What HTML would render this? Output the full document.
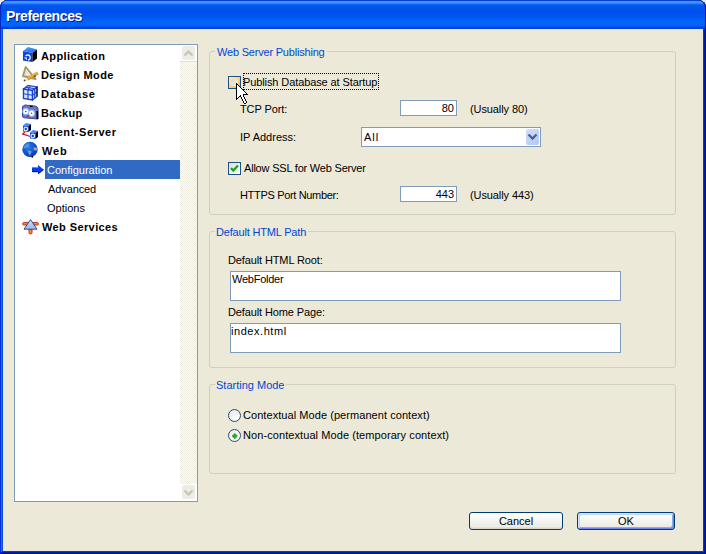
<!DOCTYPE html>
<html><head><meta charset="utf-8">
<style>
*{margin:0;padding:0;box-sizing:border-box}
html,body{width:706px;height:554px;overflow:hidden;background:#ECE9D8}
body{position:relative;font-family:"Liberation Sans",sans-serif;font-size:11px;color:#000}
.a{position:absolute}
.t{position:absolute;white-space:pre;line-height:13px;font-size:11px}
.tr{position:absolute;white-space:pre;line-height:13px;font-size:11px}
.b{font-weight:bold}
#frame{position:absolute;left:0;top:0;width:706px;height:554px;background:#ECE9D8;border-radius:8px 8px 0 0;
 box-shadow:inset -1px -1px #00138c,inset 1px 1px #0831d9,inset -2px -2px #001ea0,inset 2px 2px #166aee,inset -3px -3px #003bda,inset 3px 3px #0855dd;}
#title{position:absolute;left:0;top:0;width:706px;height:29px;border-radius:8px 8px 0 0;
 background:linear-gradient(180deg,#0A3CD8 0px,#0A3CD8 1px,#3D95FF 1px,#3D95FF 3px,#1C70FA 4px,#0058EE 5px,#0053E8 8px,#0050EE 12px,#0056F4 17px,#0063FC 21px,#0066FF 25px,#0060FA 26px,#0045DA 27px,#003DD7 29px);
 box-shadow:inset 1px 0 #0028C0,inset -1px 0 #001A9A}
#title .tt{position:absolute;left:6px;top:8px;font-size:14px;font-weight:bold;color:#fff;line-height:16px;text-shadow:1px 1px #0A1883;white-space:pre;letter-spacing:-0.38px}
.gb{position:absolute;border:1px solid #D0D0BF;border-radius:3px}
.gt{position:absolute;color:#0046D5;background:#ECE9D8;padding:0 2px;white-space:pre;line-height:13px}
.tb{position:absolute;background:#fff;border:1px solid #7F9DB9}
.chk{position:absolute;width:13px;height:13px;border:1px solid #1C5180;background:linear-gradient(135deg,#DCDCD7,#FFFFFF)}
.rad{position:absolute;width:13px;height:13px;border-radius:50%;border:1px solid #1C5180;background:radial-gradient(circle at 70% 70%,#fff 0,#E6E6E0 100%)}
.btn{position:absolute;height:18px;border:1px solid #003C74;border-radius:3px;background:linear-gradient(180deg,#FFFFFF 0,#F6F6F2 40%,#ECEBE6 85%,#D6D0C5 100%);text-align:center;line-height:16px}
</style></head><body>
<div id="frame"></div>
<div id="title"><div class="tt">Preferences</div></div>

<div class="a" style="left:14px;top:44px;width:184px;height:458px;border:1px solid #7F9DB9;background:#fff"></div>
<div class="a" style="left:180px;top:45px;width:17px;height:456px;background-color:#FEFEFB;background-image:repeating-conic-gradient(#EDEBE0 0 25%,#FEFEFB 0 50%);background-size:2px 2px"></div>
<div class="a" style="left:180px;top:45px;width:17px;height:17px;background:#fff;border-bottom:1px solid #E0DFD3"></div>
<div class="a" style="left:182px;top:46px;width:13px;height:14px;background:#EEEDE5;border-radius:2px"></div>
<svg class="a" style="left:180px;top:45px" width="17" height="17"><path d="M4.5 10.5 L8.5 6.5 L12.5 10.5" fill="none" stroke="#C6C4B5" stroke-width="2.2"/></svg>
<div class="a" style="left:180px;top:484px;width:17px;height:17px;background:#fff"></div>
<div class="a" style="left:182px;top:485px;width:13px;height:14px;background:#EEEDE5;border-radius:2px"></div>
<svg class="a" style="left:180px;top:484px" width="17" height="17"><path d="M4.5 6.5 L8.5 10.5 L12.5 6.5" fill="none" stroke="#C6C4B5" stroke-width="2.2"/></svg>

<div class="a" style="left:45px;top:160px;width:135px;height:19px;background:#316AC5"></div>
<div class="tr b" style="left:41px;top:50px;letter-spacing:0.4px">Application</div>
<div class="tr b" style="left:41px;top:69px;letter-spacing:0.4px">Design Mode</div>
<div class="tr b" style="left:41px;top:88px;letter-spacing:0.7px">Database</div>
<div class="tr b" style="left:41px;top:107px;letter-spacing:0.3px">Backup</div>
<div class="tr b" style="left:41px;top:126px;letter-spacing:0.55px">Client-Server</div>
<div class="tr b" style="left:42px;top:145px;letter-spacing:0.8px">Web</div>
<div class="tr" style="left:47px;top:164px;color:#fff">Configuration</div>
<div class="tr" style="left:48px;top:183px;letter-spacing:-0.1px">Advanced</div>
<div class="tr" style="left:47px;top:202px">Options</div>
<div class="tr b" style="left:42px;top:221px;letter-spacing:0.4px">Web Services</div>

<svg class="a" style="left:22px;top:46px" width="16" height="17">
 <defs><linearGradient id="cf" x1="0" y1="0" x2="0" y2="1"><stop offset="0" stop-color="#0C4EEC"/><stop offset="1" stop-color="#0834C0"/></linearGradient>
 <linearGradient id="ct" x1="0" y1="0" x2="1" y2="1"><stop offset="0" stop-color="#58A4FF"/><stop offset="1" stop-color="#1A60EC"/></linearGradient></defs>
 <polygon points="1,5 6,1 15,3.5 10.5,7" fill="url(#ct)"/>
 <polygon points="1,5 10.5,7 10.5,16 1,14.5" fill="url(#cf)"/>
 <polygon points="10.5,7 15,3.5 15,12.5 10.5,16" fill="#000"/>
 <path d="M3.6 10.2 A2.5 2.5 0 1 1 6 14" fill="none" stroke="#F0F4FF" stroke-width="1.3"/>
 <path d="M2.2 12 L4.2 11.8 L4.6 13.8" fill="none" stroke="#E0E8FF" stroke-width="1.1"/>
</svg>
<svg class="a" style="left:22px;top:65px" width="17" height="17">
 <polygon points="3.7,2 1,11 13.5,14.2" fill="none" stroke="#A49664" stroke-width="1.9" stroke-linejoin="round"/>
 <polygon points="4.3,6.2 3.3,10 8.2,11.2" fill="none" stroke="#D0C8A0" stroke-width="0.9"/>
 <line x1="5.5" y1="14.2" x2="15.8" y2="7.8" stroke="#D49228" stroke-width="3.2"/>
 <line x1="5.5" y1="13.5" x2="15.3" y2="7.4" stroke="#F4C468" stroke-width="1"/>
 <polygon points="2,16 4.3,12.6 6.3,15.4" fill="#ECECC0"/>
 <circle cx="2.6" cy="15.4" r="0.9" fill="#404040"/>
 <circle cx="13" cy="11.3" r="0.8" fill="#101010"/>
</svg>
<svg class="a" style="left:22px;top:84px" width="16" height="17">
 <polygon points="1.5,5 6,1.5 15,3 10.5,6.5" fill="#C8E0F4" stroke="#2048D0" stroke-width="1.2"/>
 <polygon points="1.5,5 10.5,6.5 10.5,16 1.5,14.5" fill="#D4EAF4" stroke="#1C40C8" stroke-width="1.4"/>
 <polygon points="10.5,6.5 15,3 15,12.5 10.5,16" fill="#B8D8EC" stroke="#1C40C8" stroke-width="1.2"/>
 <path d="M6 5.75 V15.25 M1.5 9.75 L10.5 11.25 M3.75 3.25 L12.75 4.75 M8.25 2.25 L5.75 5.75 M12.75 4.75 V14.25 M10.5 11.25 L15 7.75" fill="none" stroke="#2048D0" stroke-width="1.2"/>
 <line x1="15" y1="3" x2="15" y2="12.5" stroke="#000" stroke-width="1"/>
</svg>
<svg class="a" style="left:22px;top:103px" width="17" height="17">
 <polygon points="0.5,3.5 3,2 14,3.2 16,5 16,16 2,14.8 0.5,13.8" fill="#6676C6" stroke="#3A4898" stroke-width="1"/>
 <ellipse cx="3.8" cy="8.5" rx="3.4" ry="3.7" fill="#9CBAF0"/>
 <ellipse cx="9.6" cy="10.3" rx="3.4" ry="3.7" fill="#9CBAF0"/>
 <circle cx="3.8" cy="8.5" r="2.5" fill="#fff"/><circle cx="3.8" cy="8.5" r="0.8" fill="#4050A8"/>
 <circle cx="9.6" cy="10.3" r="2.5" fill="#fff"/><circle cx="9.6" cy="10.3" r="0.8" fill="#4050A8"/>
 <rect x="14.4" y="8" width="1.8" height="8" fill="#000"/>
 <rect x="8" y="2.7" width="2.6" height="1.3" fill="#000"/>
 <rect x="5.3" y="12.2" width="1.7" height="1.5" fill="#D01010"/>
</svg>
<svg class="a" style="left:22px;top:122px" width="17" height="18">
 <polygon points="1,3.5 4,1 9,2 6.5,4" fill="#3C8CFF"/>
 <polygon points="1,3.5 6.5,4 6.5,10 1,9.5" fill="#0C44E0"/>
 <polygon points="6.5,4 9,2 9,8 6.5,10" fill="#000"/>
 <circle cx="3.8" cy="7" r="1.8" fill="none" stroke="#E8F0FF" stroke-width="1.2"/>
 <path d="M3 10 L0.8 12 L8.5 14.5" fill="none" stroke="#C01818" stroke-width="1.3"/>
 <polygon points="8,10.5 11,8 16,9 13.5,11" fill="#3C8CFF"/>
 <polygon points="8,10.5 13.5,11 13.5,17 8,16.5" fill="#0C44E0"/>
 <polygon points="13.5,11 16,9 16,15 13.5,17" fill="#000"/>
 <circle cx="10.8" cy="14" r="1.8" fill="none" stroke="#E8F0FF" stroke-width="1.2"/>
</svg>
<svg class="a" style="left:22px;top:141px" width="17" height="17">
 <defs><radialGradient id="gl" cx="0.4" cy="0.35" r="0.75"><stop offset="0" stop-color="#2A7EE8"/><stop offset="0.6" stop-color="#0A52D0"/><stop offset="1" stop-color="#06309C"/></radialGradient></defs>
 <circle cx="8" cy="8.4" r="7.7" fill="url(#gl)"/>
 <path d="M1.5 6 Q3.5 2.2 7.5 2.2 L6.8 5.5 Q4.5 7.5 2 7.5 Z" fill="#5AA4E4" opacity="0.75"/>
 <path d="M5.5 9.5 L9.5 10 L9 12.5 L7.5 14.5 L6.5 12 Z" fill="#8C98B4"/>
 <path d="M11.5 6.5 L15.2 6.8 L15.4 9.5 L12 9.2 Z" fill="#B8A0B4"/>
 <rect x="9.5" y="15" width="1.6" height="1.6" fill="#000"/>
</svg>
<svg class="a" style="left:31px;top:164px" width="15" height="12">
 <polygon points="2,4 8,4 8,2 13.5,6.5 8,11 8,9 2,9" fill="#C8C8C8" opacity="0.6"/>
 <polygon points="1,3 7,3 7,1 12.5,5.5 7,10 7,8 1,8" fill="#0A3CEB"/>
 <line x1="1" y1="3.4" x2="7.3" y2="3.4" stroke="#40D0FF" stroke-width="0.8"/>
 <line x1="1" y1="7.6" x2="7" y2="7.6" stroke="#000070" stroke-width="0.8"/>
 <line x1="7.2" y1="9.7" x2="12.5" y2="5.5" stroke="#000060" stroke-width="1"/>
</svg>
<svg class="a" style="left:22px;top:217px" width="17" height="18">
 <rect x="0.6" y="5.6" width="15.8" height="2.4" rx="1.1" fill="#F49428" stroke="#C41818" stroke-width="0.9"/>
 <rect x="7" y="12" width="3" height="4.8" rx="1" fill="#F49428" stroke="#C41818" stroke-width="0.9"/>
 <defs><linearGradient id="wt" x1="0" y1="0" x2="0" y2="1"><stop offset="0" stop-color="#C0E0FF"/><stop offset="1" stop-color="#98B8F4"/></linearGradient></defs>
 <polygon points="8.5,2.5 15,12.2 2,12.2" fill="url(#wt)" stroke="#2A3A80" stroke-width="0.9" stroke-linejoin="round"/>
</svg>
<div class="gb" style="left:209px;top:51px;width:467px;height:164px"></div>
<div class="gt" style="left:215px;top:46px;letter-spacing:-0.2px">Web Server Publishing</div>
<div class="a" style="left:228px;top:76px;width:13px;height:13px;background:#1C5180"></div>
<div class="a" style="left:229px;top:77px;width:11px;height:11px;background:linear-gradient(135deg,#FFF0CF 0%,#F9D48A 50%,#F8B330 100%)"></div>
<div class="a" style="left:231px;top:79px;width:7px;height:7px;background:linear-gradient(135deg,#DCDCD7,#F0F0EC)"></div>
<div class="a" style="left:243px;top:73px;width:136px;height:17px;border:1px dotted #000"></div>
<div class="t" style="left:243px;top:76px;letter-spacing:-0.1px">Publish Database at Startup</div>
<div class="t" style="left:240px;top:103px;letter-spacing:-0.1px">TCP Port:</div>
<div class="tb" style="left:400px;top:100px;width:57px;height:16px"></div>
<div class="t" style="left:400px;top:102px;width:54px;text-align:right">80</div>
<div class="t" style="left:470px;top:103px;letter-spacing:-0.1px">(Usually 80)</div>
<div class="t" style="left:240px;top:131px">IP Address:</div>
<div class="tb" style="left:361px;top:127px;width:180px;height:20px"></div>
<div class="t" style="left:364px;top:131px;letter-spacing:1px">All</div>
<div class="a" style="left:526px;top:129px;width:13px;height:16px;border-radius:2px;background:linear-gradient(135deg,#D2E0FD,#B0C6F6)"></div>
<svg class="a" style="left:526px;top:129px" width="13" height="16"><path d="M2.5 5.5 L6.5 9.5 L10.5 5.5" fill="none" stroke="#4D6185" stroke-width="2.3"/></svg>
<div class="chk" style="left:228px;top:162px"></div>
<svg class="a" style="left:228px;top:162px" width="13" height="13"><path d="M3 6 L5.3 8.5 L10 3.5" fill="none" stroke="#21A121" stroke-width="2.3"/></svg>
<div class="t" style="left:244px;top:162px;letter-spacing:-0.2px">Allow SSL for Web Server</div>
<div class="t" style="left:240px;top:189px;letter-spacing:-0.33px">HTTPS Port Number:</div>
<div class="tb" style="left:400px;top:186px;width:57px;height:16px"></div>
<div class="t" style="left:400px;top:188px;width:54px;text-align:right">443</div>
<div class="t" style="left:470px;top:189px;letter-spacing:-0.1px">(Usually 443)</div>
<div class="gb" style="left:209px;top:231px;width:467px;height:137px"></div>
<div class="gt" style="left:215px;top:226px;letter-spacing:-0.18px;padding-left:1px">Default HTML Path</div>
<div class="t" style="left:228px;top:254px;letter-spacing:-0.12px">Default HTML Root:</div>
<div class="tb" style="left:230px;top:271px;width:391px;height:30px"></div>
<div class="t" style="left:232px;top:273px;letter-spacing:-0.25px">WebFolder</div>
<div class="t" style="left:228px;top:306px;letter-spacing:-0.12px">Default Home Page:</div>
<div class="tb" style="left:230px;top:323px;width:391px;height:30px"></div>
<div class="t" style="left:231px;top:325px;letter-spacing:0.55px">index.html</div>
<div class="gb" style="left:209px;top:384px;width:467px;height:90px"></div>
<div class="gt" style="left:215px;top:379px;padding-left:1px">Starting Mode</div>
<div class="rad" style="left:228px;top:409px"></div>
<div class="rad" style="left:228px;top:429px"></div>
<div class="a" style="left:232.7px;top:433.7px;width:3.6px;height:3.6px;background:#2AAE2A;transform:rotate(45deg);box-shadow:0 0 0.6px #1A8A1A"></div>
<div class="t" style="left:243px;top:409px;letter-spacing:0.06px">Contextual Mode (permanent context)</div>
<div class="t" style="left:243px;top:429px;letter-spacing:0.08px">Non-contextual Mode (temporary context)</div>
<div class="btn" style="left:469px;top:512px;width:94px;letter-spacing:0px">Cancel</div>
<div class="btn" style="left:577px;top:512px;width:98px;box-shadow:inset 1px 1px #CEE7FF,inset -1px -1px #6982EE,inset 2px 2px #BCD4F6,inset -2px -2px #89ADE4">OK</div>
<svg class="a" style="left:236px;top:83px" width="12" height="21" shape-rendering="crispEdges"><path d="M0 0h1v1h-1zM0 1h1v1h-1zM1 1h1v1h-1zM0 2h1v1h-1zM2 2h1v1h-1zM0 3h1v1h-1zM3 3h1v1h-1zM0 4h1v1h-1zM4 4h1v1h-1zM0 5h1v1h-1zM5 5h1v1h-1zM0 6h1v1h-1zM6 6h1v1h-1zM0 7h1v1h-1zM7 7h1v1h-1zM0 8h1v1h-1zM8 8h1v1h-1zM0 9h1v1h-1zM9 9h1v1h-1zM0 10h1v1h-1zM10 10h1v1h-1zM0 11h1v1h-1zM7 11h1v1h-1zM8 11h1v1h-1zM9 11h1v1h-1zM10 11h1v1h-1zM11 11h1v1h-1zM0 12h1v1h-1zM4 12h1v1h-1zM7 12h1v1h-1zM0 13h1v1h-1zM3 13h1v1h-1zM4 13h1v1h-1zM7 13h1v1h-1zM0 14h1v1h-1zM2 14h1v1h-1zM5 14h1v1h-1zM8 14h1v1h-1zM0 15h1v1h-1zM1 15h1v1h-1zM5 15h1v1h-1zM8 15h1v1h-1zM0 16h1v1h-1zM6 16h1v1h-1zM9 16h1v1h-1zM6 17h1v1h-1zM9 17h1v1h-1zM7 18h1v1h-1zM10 18h1v1h-1zM7 19h1v1h-1zM10 19h1v1h-1zM8 20h1v1h-1zM9 20h1v1h-1z" fill="#000"/><path d="M1 2h1v1h-1zM1 3h1v1h-1zM2 3h1v1h-1zM1 4h1v1h-1zM2 4h1v1h-1zM3 4h1v1h-1zM1 5h1v1h-1zM2 5h1v1h-1zM3 5h1v1h-1zM4 5h1v1h-1zM1 6h1v1h-1zM2 6h1v1h-1zM3 6h1v1h-1zM4 6h1v1h-1zM5 6h1v1h-1zM1 7h1v1h-1zM2 7h1v1h-1zM3 7h1v1h-1zM4 7h1v1h-1zM5 7h1v1h-1zM6 7h1v1h-1zM1 8h1v1h-1zM2 8h1v1h-1zM3 8h1v1h-1zM4 8h1v1h-1zM5 8h1v1h-1zM6 8h1v1h-1zM7 8h1v1h-1zM1 9h1v1h-1zM2 9h1v1h-1zM3 9h1v1h-1zM4 9h1v1h-1zM5 9h1v1h-1zM6 9h1v1h-1zM7 9h1v1h-1zM8 9h1v1h-1zM1 10h1v1h-1zM2 10h1v1h-1zM3 10h1v1h-1zM4 10h1v1h-1zM5 10h1v1h-1zM6 10h1v1h-1zM7 10h1v1h-1zM8 10h1v1h-1zM9 10h1v1h-1zM1 11h1v1h-1zM2 11h1v1h-1zM3 11h1v1h-1zM4 11h1v1h-1zM5 11h1v1h-1zM6 11h1v1h-1zM1 12h1v1h-1zM2 12h1v1h-1zM3 12h1v1h-1zM5 12h1v1h-1zM6 12h1v1h-1zM1 13h1v1h-1zM2 13h1v1h-1zM5 13h1v1h-1zM6 13h1v1h-1zM1 14h1v1h-1zM6 14h1v1h-1zM7 14h1v1h-1zM6 15h1v1h-1zM7 15h1v1h-1zM7 16h1v1h-1zM8 16h1v1h-1zM7 17h1v1h-1zM8 17h1v1h-1zM8 18h1v1h-1zM9 18h1v1h-1zM8 19h1v1h-1zM9 19h1v1h-1z" fill="#fff"/></svg>
</body></html>
